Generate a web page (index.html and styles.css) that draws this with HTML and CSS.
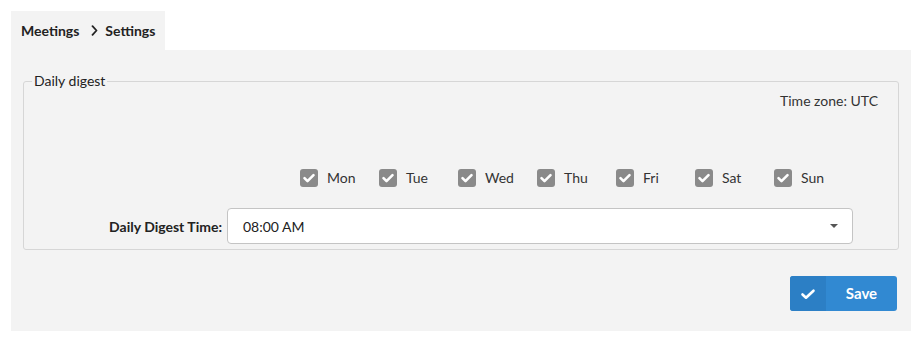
FILE: index.html
```html
<!DOCTYPE html>
<html lang="en">
<head>
  <meta charset="UTF-8">
  <title>Meetings Settings</title>
  <link rel="stylesheet" href="styles.css">
</head>
<body>
  <div class="page">
    <div class="tab">Meetings<svg class="sep" viewBox="0 0 7 11" width="7" height="11"><path d="M1.5 1.2l4 4.3-4 4.3" fill="none" stroke="#222" stroke-width="1.8" stroke-linecap="round" stroke-linejoin="round"/></svg>Settings</div>

    <div class="panel">
      <fieldset class="digest">
        <legend>Daily digest</legend>
        <div class="timezone">Time zone: UTC</div>

        <div class="days">
          <label class="day"><span class="box"><svg viewBox="0 0 18 18" width="18" height="18"><path d="M4.5 9.2l3 3 6-6" fill="none" stroke="#fff" stroke-width="2.6" stroke-linecap="round" stroke-linejoin="round"/></svg></span>Mon</label>
          <label class="day"><span class="box"><svg viewBox="0 0 18 18" width="18" height="18"><path d="M4.5 9.2l3 3 6-6" fill="none" stroke="#fff" stroke-width="2.6" stroke-linecap="round" stroke-linejoin="round"/></svg></span>Tue</label>
          <label class="day"><span class="box"><svg viewBox="0 0 18 18" width="18" height="18"><path d="M4.5 9.2l3 3 6-6" fill="none" stroke="#fff" stroke-width="2.6" stroke-linecap="round" stroke-linejoin="round"/></svg></span>Wed</label>
          <label class="day"><span class="box"><svg viewBox="0 0 18 18" width="18" height="18"><path d="M4.5 9.2l3 3 6-6" fill="none" stroke="#fff" stroke-width="2.6" stroke-linecap="round" stroke-linejoin="round"/></svg></span>Thu</label>
          <label class="day"><span class="box"><svg viewBox="0 0 18 18" width="18" height="18"><path d="M4.5 9.2l3 3 6-6" fill="none" stroke="#fff" stroke-width="2.6" stroke-linecap="round" stroke-linejoin="round"/></svg></span>Fri</label>
          <label class="day"><span class="box"><svg viewBox="0 0 18 18" width="18" height="18"><path d="M4.5 9.2l3 3 6-6" fill="none" stroke="#fff" stroke-width="2.6" stroke-linecap="round" stroke-linejoin="round"/></svg></span>Sat</label>
          <label class="day"><span class="box"><svg viewBox="0 0 18 18" width="18" height="18"><path d="M4.5 9.2l3 3 6-6" fill="none" stroke="#fff" stroke-width="2.6" stroke-linecap="round" stroke-linejoin="round"/></svg></span>Sun</label>
        </div>

        <div class="time-row">
          <div class="time-label">Daily Digest Time:</div>
          <div class="select">
            <span>08:00 AM</span>
            <span class="caret"></span>
          </div>
        </div>
      </fieldset>

      <div class="actions">
        <button class="save">
          <span class="save-icon"><svg viewBox="0 0 16 16" width="16" height="16"><path d="M2.5 8.5l3.5 3.2 7.5-7" fill="none" stroke="#fff" stroke-width="2.6" stroke-linecap="round" stroke-linejoin="round"/></svg></span>
          <span class="save-text">Save</span>
        </button>
      </div>
    </div>
  </div>
</body>
</html>
```

FILE: styles.css
```css
* {
  box-sizing: border-box;
  margin: 0;
  padding: 0;
}

body {
  background: #ffffff;
  font-family: Lato, 'Open Sans', sans-serif;
  font-size: 14px;
  color: #333333;
}

.page {
  padding: 11px 13px 16px 11px;
}

.tab {
  display: inline-flex;
  align-items: center;
  height: 39px;
  padding: 0 10px;
  background: #f3f3f3;
  font-weight: 700;
  color: #222222;
}

.tab .sep {
  display: block;
  margin: 0 7px 0 12px;
}

.panel {
  background: #f3f3f3;
  padding: 21px 12px 20px 12px;
}

.digest {
  border: 1px solid #d6d6d6;
  border-radius: 3px;
  padding: 0 20px 5px 0;
}

.digest legend {
  margin-left: 8px;
  padding: 0 2px;
  line-height: 20px;
  color: #222222;
}

.timezone {
  text-align: right;
  line-height: 20px;
}

.days {
  display: flex;
  margin-top: 58px;
  padding-left: 276px;
}

.day {
  display: flex;
  align-items: center;
  gap: 9px;
  width: 79px;
  height: 18px;
  line-height: 18px;
}

.box {
  display: block;
  width: 18px;
  height: 18px;
  border-radius: 3px;
  background: #8a8a8a;
}

.box svg {
  display: block;
}

.time-row {
  display: flex;
  align-items: center;
  margin-top: 21px;
}

.time-label {
  width: 198px;
  text-align: right;
  font-weight: 700;
  color: #222222;
}

.select {
  display: flex;
  align-items: center;
  justify-content: space-between;
  margin-left: 5px;
  width: 626px;
  height: 36px;
  padding: 0 14px 0 15px;
  background: #ffffff;
  border: 1px solid #c4c4c4;
  border-radius: 4px;
  color: #222222;
}

.caret {
  width: 0;
  height: 0;
  border-left: 4px solid transparent;
  border-right: 4px solid transparent;
  border-top: 4px solid #555555;
}

.actions {
  display: flex;
  justify-content: flex-end;
  margin-top: 26px;
  padding-right: 2px;
}

.save {
  display: flex;
  width: 107px;
  height: 35px;
  border: none;
  border-radius: 3px;
  overflow: hidden;
  background: #3189d2;
  color: #ffffff;
  font-family: Lato, 'Open Sans', sans-serif;
  font-size: 15px;
  font-weight: 700;
  cursor: pointer;
}

.save-icon {
  display: flex;
  align-items: center;
  justify-content: center;
  width: 36px;
  height: 100%;
  background: #2c7fc5;
}

.save-icon svg {
  display: block;
}

.save-text {
  flex: 1;
  line-height: 35px;
  text-align: center;
}
```
